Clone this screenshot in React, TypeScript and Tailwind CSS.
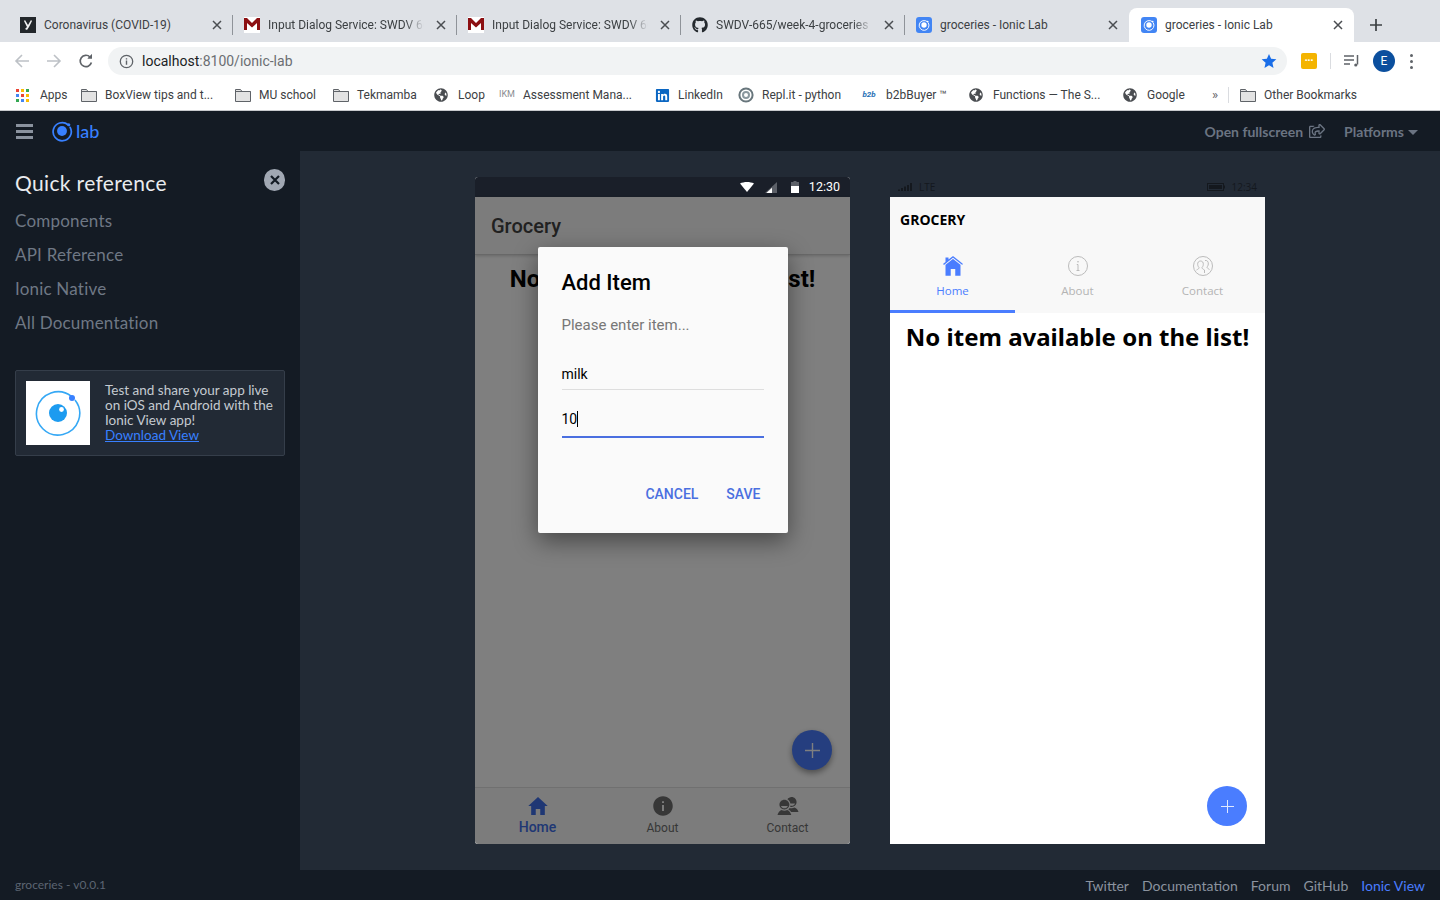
import { FaGithub, FaLinkedin, FaRegShareSquare, FaGlobeAmericas } from 'react-icons/fa'
import { IoMdHome, IoMdInformationCircle, IoMdContacts, IoIosHome } from 'react-icons/io'
import type { ReactNode } from 'react'

function IonicRing({ size, color = '#3880ff' }: { size: number; color?: string }) {
  return (
    <svg width={size} height={size} viewBox="0 0 24 24" fill="none">
      <path d="M18.6 5.2 A9.9 9.9 0 1 0 20.9 8" stroke={color} strokeWidth="1.9" strokeLinecap="round" />
      <circle cx="12" cy="12" r="5.4" fill={color} />
      <circle cx="19.4" cy="5.2" r="1.7" fill={color} />
    </svg>
  )
}

function TabIonic() {
  return (
    <div className="flex h-4 w-4 items-center justify-center rounded-[3px] bg-[#4285f4]">
      <IonicRing size={12} color="#ffffff" />
    </div>
  )
}

function GmailM() {
  return (
    <svg width="16" height="16" viewBox="0 0 16 16">
      <rect width="16" height="16" fill="#fff" />
      <path d="M0 1h3l5 5 5-5h3v12h-3V6L8 10.5 3 6v7H0z" fill="#8c0f12" />
    </svg>
  )
}

function CoronaIcon() {
  return (
    <svg width="16" height="16" viewBox="0 0 16 16">
      <rect width="16" height="16" fill="#23272b" />
      <path d="M5 3l3 5 3-5 1 1-3 6-2 3-2-1 2-2-3-6z" fill="#f1f1f1" />
    </svg>
  )
}

function CloseX({ color = '#4a4d51' }: { color?: string }) {
  return (
    <svg width="10" height="10" viewBox="0 0 10 10">
      <path d="M1 1l8 8M9 1l-8 8" stroke={color} strokeWidth="1.5" />
    </svg>
  )
}

const tabs: { title: string; icon: ReactNode; fade?: boolean; active?: boolean; sep?: boolean }[] = [
  { title: 'Coronavirus (COVID-19)', icon: <CoronaIcon />, sep: true },
  { title: 'Input Dialog Service: SWDV 665', icon: <GmailM />, fade: true, sep: true },
  { title: 'Input Dialog Service: SWDV 665', icon: <GmailM />, fade: true, sep: true },
  { title: 'SWDV-665/week-4-groceries', icon: <FaGithub size={16} color="#24292e" />, fade: true, sep: true },
  { title: 'groceries - Ionic Lab', icon: <TabIonic /> },
  { title: 'groceries - Ionic Lab', icon: <TabIonic />, active: true },
]

function ChromeTab({ title, icon, fade, active, sep }: (typeof tabs)[number]) {
  return (
    <div
      className={
        active
          ? 'relative flex h-[34px] w-[225px] items-center rounded-t-lg bg-white pl-[12px] pr-[11px]'
          : 'relative flex h-[34px] w-[224px] items-center pl-[11px] pr-[11px]'
      }
    >
      <div className="flex w-4 shrink-0 items-center justify-center">{icon}</div>
      <div
        className={
          fade
            ? 'ml-2 flex-1 overflow-hidden whitespace-nowrap text-[12px] text-[#3c4043] [mask-image:linear-gradient(to_right,black_88%,transparent)]'
            : 'ml-2 flex-1 overflow-hidden whitespace-nowrap text-[12px] text-[#3c4043]'
        }
      >
        {title}
      </div>
      <div className="ml-3 flex w-[10px] shrink-0 items-center">
        <CloseX />
      </div>
      {sep && <div className="absolute right-0 top-[7px] h-[20px] w-px bg-[#8f9399]" />}
    </div>
  )
}

function AppsGrid() {
  const colors = ['#ea4335', '#fbbc05', '#34a853', '#4285f4', '#ea4335', '#fbbc05', '#34a853', '#4285f4', '#fbbc05']
  return (
    <div className="grid w-[13px] grid-cols-3 gap-[2px]">
      {colors.map((c, i) => (
        <div key={i} className="h-[3px] w-[3px]" style={{ background: c }} />
      ))}
    </div>
  )
}

function FolderIcon() {
  return (
    <svg width="16" height="14" viewBox="0 0 16 14">
      <path d="M.5 1.5h5l1.5 2h8.5v10H.5z" fill="#e3e3e3" stroke="#5f6368" />
      <path d="M.5 3.5h15" stroke="#5f6368" />
    </svg>
  )
}

function Globe() {
  return <FaGlobeAmericas size={14} color="#4a4d51" />
}

function ReplIcon() {
  return (
    <svg width="16" height="16" viewBox="0 0 16 16" fill="none">
      <circle cx="8" cy="8" r="6.6" stroke="#68767c" strokeWidth="2" />
      <circle cx="8" cy="8" r="3" stroke="#8a989e" strokeWidth="2" />
    </svg>
  )
}

const bookmarks: { label: string; icon: ReactNode; gap: string; width: string }[] = [
  { label: 'Apps', icon: <AppsGrid />, gap: 'ml-[10px]', width: 'w-[67px]' },
  { label: 'BoxView tips and t...', icon: <FolderIcon />, gap: 'ml-[8px]', width: 'w-[154px]' },
  { label: 'MU school', icon: <FolderIcon />, gap: 'ml-[8px]', width: 'w-[98px]' },
  { label: 'Tekmamba', icon: <FolderIcon />, gap: 'ml-[8px]', width: 'w-[100px]' },
  { label: 'Loop', icon: <Globe />, gap: 'ml-[9px]', width: 'w-[66px]' },
  {
    label: 'Assessment Mana...',
    icon: <span className="text-[9px] text-[#8a8d91]">IKM</span>,
    gap: 'ml-[8px]',
    width: 'w-[155px]',
  },
  { label: 'LinkedIn', icon: <FaLinkedin size={15} color="#0a66c2" />, gap: 'ml-[8px]', width: 'w-[84px]' },
  { label: 'Repl.it - python', icon: <ReplIcon />, gap: 'ml-[8px]', width: 'w-[123px]' },
  {
    label: 'b2bBuyer ™',
    icon: <span className="text-[8px] font-bold italic text-[#1f6fb5]">b2b</span>,
    gap: 'ml-[9px]',
    width: 'w-[107px]',
  },
  { label: 'Functions — The S...', icon: <Globe />, gap: 'ml-[9px]', width: 'w-[154px]' },
  { label: 'Google', icon: <Globe />, gap: 'ml-[9px]', width: 'w-[80px]' },
]

function BrowserChrome() {
  return (
    <div className="font-['Roboto',sans-serif]">
      <div className="flex h-[42px] items-end bg-[#dee1e6] pl-[9px]">
        {tabs.map((t, i) => (
          <ChromeTab key={i} {...t} />
        ))}
        <div className="flex h-[34px] w-[44px] items-center justify-center text-[22px] font-normal text-[#3c4043]">
          <svg width="12" height="12" viewBox="0 0 12 12">
            <path d="M6 0v12M0 6h12" stroke="#3c4043" strokeWidth="1.7" />
          </svg>
        </div>
      </div>

      <div className="flex h-[38px] items-center bg-white pl-[14px]">
        <svg width="16" height="16" viewBox="0 0 16 16" fill="none" stroke="#bdc1c6" strokeWidth="1.6">
          <path d="M15 8H2M8 2L2 8l6 6" />
        </svg>
        <svg className="ml-[16px]" width="16" height="16" viewBox="0 0 16 16" fill="none" stroke="#bdc1c6" strokeWidth="1.6">
          <path d="M1 8h13M8 2l6 6-6 6" />
        </svg>
        <svg className="ml-[16px]" width="16" height="16" viewBox="0 0 16 16" fill="none" stroke="#5f6368" strokeWidth="1.7">
          <path d="M13.4 9.5A5.7 5.7 0 1 1 12 4" />
          <path d="M14 1v4.6H9.4" fill="#5f6368" stroke="none" />
          <path d="M14 1.2v4.4H9.6z" fill="#5f6368" stroke="none" />
        </svg>
        <div className="ml-[14px] flex h-[28px] w-[1179px] items-center rounded-full bg-[#f1f3f4] pl-[11px] pr-[10px]">
          <svg width="15" height="15" viewBox="0 0 15 15" fill="none">
            <circle cx="7.5" cy="7.5" r="6.2" stroke="#5f6368" strokeWidth="1.3" />
            <path d="M7.5 6.6v4.2M7.5 4.2v1.4" stroke="#5f6368" strokeWidth="1.4" />
          </svg>
          <div className="ml-[8px] flex-1 text-[14px] text-[#6b6e72]">
            <span className="text-[#202124]">localhost</span>:8100/ionic-lab
          </div>
          <svg width="16" height="16" viewBox="0 0 24 24" fill="#1a6ee8">
            <path d="M12 1.5l3.2 7.2 7.8.8-5.9 5.2 1.7 7.7L12 18.4l-6.8 4 1.7-7.7L1 9.5l7.8-.8z" />
          </svg>
        </div>
        <div className="ml-[14px] flex h-[16px] w-[16px] items-center justify-center rounded-[2px] bg-[#f4b400] text-[8px] font-bold leading-none text-white">
          •••
        </div>
        <div className="ml-[13px] h-[16px] w-px bg-[#dadce0]" />
        <svg className="ml-[13px]" width="16" height="14" viewBox="0 0 16 14" fill="none" stroke="#5f6368" strokeWidth="1.5">
          <path d="M0 2h10M0 6h10M0 10h6M13.5 1v9.5" />
          <circle cx="11.8" cy="11" r="1.6" fill="#5f6368" stroke="none" />
        </svg>
        <div className="ml-[13px] flex h-[22px] w-[22px] items-center justify-center rounded-full bg-[#0b4f9e] text-[12px] text-white">
          E
        </div>
        <div className="ml-[15px] flex flex-col gap-[3px]">
          <div className="h-[3px] w-[3px] rounded-full bg-[#5f6368]" />
          <div className="h-[3px] w-[3px] rounded-full bg-[#5f6368]" />
          <div className="h-[3px] w-[3px] rounded-full bg-[#5f6368]" />
        </div>
      </div>

      <div className="flex h-[31px] items-center border-b border-[#c8cacd] bg-white pl-[14px] text-[12px] text-[#3c4043]">
        {bookmarks.map((b) => (
          <div key={b.label} className={`flex shrink-0 items-center ${b.width}`}>
            <div className="flex w-4 shrink-0 items-center justify-center">{b.icon}</div>
            <span className={`${b.gap} whitespace-nowrap`}>{b.label}</span>
          </div>
        ))}
        <span className="ml-[10px] text-[13px] text-[#5f6368]">»</span>
        <div className="ml-[10px] h-[16px] w-px bg-[#dadce0]" />
        <div className="ml-[11px] flex items-center">
          <FolderIcon />
          <span className="ml-[8px] whitespace-nowrap">Other Bookmarks</span>
        </div>
      </div>
    </div>
  )
}

function LabHeader() {
  return (
    <div className="flex h-[40px] items-center bg-[#141b24] pl-[16px] pr-[22px] font-['Lato',sans-serif]">
      <div className="flex w-[17px] flex-col gap-[3px]">
        <div className="h-[3px] bg-[#8a929e]" />
        <div className="h-[3px] bg-[#8a929e]" />
        <div className="h-[3px] bg-[#8a929e]" />
      </div>
      <div className="ml-[18px]">
        <IonicRing size={22} />
      </div>
      <span className="ml-[3px] text-[18px] font-medium leading-none text-[#3880ff]">lab</span>
      <div className="flex-1" />
      <span className="text-[14px] font-bold text-[#6b7482]">Open fullscreen</span>
      <FaRegShareSquare className="ml-[6px]" size={16} color="#6b7482" />
      <span className="ml-[19px] text-[14px] font-bold text-[#6b7482]">Platforms</span>
      <div className="ml-[4px] mt-[2px] h-0 w-0 border-x-[5px] border-t-[5px] border-x-transparent border-t-[#6b7482]" />
    </div>
  )
}

const quickLinks = ['Components', 'API Reference', 'Ionic Native', 'All Documentation']

function Sidebar() {
  return (
    <aside className="flex w-[300px] shrink-0 flex-col bg-[#141b24] px-[15px] pt-[18px] font-['Lato',sans-serif]">
      <div className="flex h-[28px] items-start justify-between">
        <span className="text-[21px] leading-[28px] tracking-[0.35px] text-[#e9ebee]">Quick reference</span>
        <div className="flex h-[22px] w-[21px] items-center justify-center rounded-full bg-[#a1a8b3]">
          <svg width="10" height="10" viewBox="0 0 10 10">
            <path d="M1 1l8 8M9 1l-8 8" stroke="#141b24" strokeWidth="2.2" />
          </svg>
        </div>
      </div>
      <div className="mt-[7px] flex flex-col">
        {quickLinks.map((l) => (
          <span key={l} className="h-[34px] text-[17px] leading-[34px] tracking-[0.2px] text-[#6f7885]">
            {l}
          </span>
        ))}
      </div>
      <div className="mt-[30px] flex h-[86px] items-center rounded-[2px] border border-[#353e4a] bg-[#222a35] pl-[10px]">
        <div className="flex h-[64px] w-[64px] shrink-0 items-center justify-center bg-white">
          <svg width="46" height="46" viewBox="0 0 46 46" fill="none">
            <path d="M36.5 6.5A21.6 21.6 0 1 0 40 10" stroke="#35a8f5" strokeWidth="1.6" />
            <circle cx="23" cy="23" r="9" fill="#1c9bf0" />
            <circle cx="26.5" cy="19.5" r="2.4" fill="#fff" />
            <circle cx="37" cy="8" r="3" fill="#3880ff" />
          </svg>
        </div>
        <div className="ml-[15px] text-[13.5px] leading-[15px] text-[#c5cad1]">
          <div className="whitespace-nowrap">Test and share your app live</div>
          <div className="whitespace-nowrap">on iOS and Android with the</div>
          <div>Ionic View app!</div>
          <div className="text-[#3880ff] underline">Download View</div>
        </div>
      </div>
    </aside>
  )
}

function AndroidPhone() {
  return (
    <div className="relative flex h-[667px] w-[375px] flex-col overflow-hidden rounded-[3px] bg-white font-['Roboto',sans-serif]">
      <div className="flex h-[20px] shrink-0 items-center justify-end bg-[#1a1f29] pr-[10px] text-[12.5px] text-white">
        <svg width="14" height="10" viewBox="0 0 14 10">
          <path d="M0 1.5C4 -.5 10 -.5 14 1.5L7 10z" fill="#fff" />
        </svg>
        <svg className="ml-[11px]" width="12" height="11" viewBox="0 0 12 11">
          <path d="M12 0v11H0z" fill="#5c6068" />
          <path d="M7 5.8V11H1.4z" fill="#fff" />
        </svg>
        <svg className="ml-[14px]" width="8" height="12" viewBox="0 0 8 12">
          <path d="M2.5 0h3v1H8v11H0V1h2.5z" fill="#5c6068" />
          <path d="M0 5h8v7H0z" fill="#fff" />
        </svg>
        <span className="ml-[10px]">12:30</span>
      </div>

      <div className="flex h-[58px] shrink-0 items-center border-b border-[#d0d0d0] bg-[#f8f8f8] pl-[16px] text-[20px] font-medium text-[#424242] shadow-[0_1px_3px_rgba(0,0,0,0.2)]">
        Grocery
      </div>
      <div className="flex-1 pt-[8px] text-center text-[24px] font-bold leading-[32px] text-black">
        No item available on the list!
      </div>
      <div className="relative flex h-[57px] shrink-0 border-t border-[#e0e0e0] bg-[#f8f8f8]">
        <div className="flex flex-1 flex-col items-center pt-[6px] text-[#3f6fe8]">
          <IoMdHome size={24} />
          <span className="mt-[1px] text-[14px] font-medium leading-[16px]">Home</span>
        </div>
        <div className="flex flex-1 flex-col items-center pt-[6px] text-[#6f6f6f]">
          <IoMdInformationCircle size={24} />
          <span className="mt-[2px] text-[12px] leading-[16px]">About</span>
        </div>
        <div className="flex flex-1 flex-col items-center pt-[6px] text-[#6f6f6f]">
          <IoMdContacts size={24} />
          <span className="mt-[2px] text-[12px] leading-[16px]">Contact</span>
        </div>
      </div>
      <div className="absolute bottom-[74px] right-[18px] flex h-[40px] w-[40px] items-center justify-center rounded-full bg-[#4a7dff] shadow-[0_3px_6px_rgba(0,0,0,0.4)]">
        <svg width="15" height="15" viewBox="0 0 15 15">
          <path d="M7.5 0v15M0 7.5h15" stroke="#fff" strokeWidth="1.4" />
        </svg>
      </div>

      {/* backdrop + alert */}
      <div className="absolute inset-x-0 bottom-0 top-[20px] flex justify-center bg-black/50 pt-[50px]">
        <div className="flex h-[286px] w-[250px] flex-col rounded-[2px] bg-[#fafafa] px-[24px] shadow-[0_8px_24px_rgba(0,0,0,0.45)]">
          <div className="mt-[21px] text-[22px] font-medium leading-[30px] text-black">Add Item</div>
          <div className="mt-[17px] text-[15px] leading-[20px] text-[#777777]">Please enter item...</div>
          <div className="mt-[25px] h-[30px] border-b border-[#dedede] pt-[4px] text-[14px] leading-[20px] text-black">milk</div>
          <div className="mt-[16px] flex h-[32px] items-start border-b-2 border-[#4a6fe0] pt-[3px] text-[14px] leading-[20px] text-black">
            10
            <div className="mt-[2px] h-[16px] w-px bg-black" />
          </div>
          <div className="mt-[46px] flex justify-end pr-[3px] text-[14px] font-medium text-[#4a6fe0]">
            <span>CANCEL</span>
            <span className="ml-[28px]">SAVE</span>
          </div>
        </div>
      </div>
    </div>
  )
}

function WindowsPhone() {
  return (
    <div className="relative flex h-[667px] w-[375px] flex-col overflow-hidden bg-white font-['Open_Sans',sans-serif]">
      <div className="flex h-[20px] shrink-0 items-center bg-[#222a35] pl-[8px] pr-[8px] text-[10px] text-[#14181e]">
        <svg width="15" height="8" viewBox="0 0 15 8" fill="#14181e">
          <path d="M0 6.5h2V8H0zM3 5h2v3H3zM6 3.500h2V8H6zM9 2h2v6H9zM12 0h2v8h-2z" />
        </svg>
        <span className="ml-[6px]">LTE</span>
        <div className="flex-1" />
        <svg width="18" height="8" viewBox="0 0 18 8">
          <rect x=".5" y=".5" width="16" height="7" fill="none" stroke="#14181e" />
          <rect x="2" y="2" width="13" height="4" fill="#14181e" />
          <rect x="17" y="2.500" width="1" height="3" fill="#14181e" />
        </svg>
        <span className="ml-[7px]">12:34</span>
      </div>

      <div className="shrink-0 bg-[#f8f8f8]">
        <div className="flex h-[44px] items-center pl-[10px] text-[14px] font-bold text-black">GROCERY</div>
        <div className="flex h-[72px]">
          <div className="flex flex-1 flex-col items-center border-b-[3px] border-[#4a7dff] pt-[13px] text-[#4a7dff]">
            <IoIosHome size={24} />
            <span className="mt-[5px] text-[11.500px] leading-[16px]">Home</span>
          </div>
          <div className="flex flex-1 flex-col items-center pt-[13px] text-[#b4b4b4]">
            <svg width="24" height="24" viewBox="0 0 24 24" fill="none" stroke="currentColor" strokeWidth="0.9">
              <circle cx="12" cy="12" r="9.5" />
              <path d="M12 10.500v6M10.500 16.500h3M10.800 10.500H12" />
              <circle cx="12" cy="7.800" r=".8" fill="currentColor" stroke="none" />
            </svg>
            <span className="mt-[5px] text-[11.500px] leading-[16px]">About</span>
          </div>
          <div className="flex flex-1 flex-col items-center pt-[13px] text-[#b4b4b4]">
            <svg width="24" height="24" viewBox="0 0 24 24" fill="none" stroke="currentColor" strokeWidth="0.9">
              <circle cx="12" cy="12" r="9.5" />
              <path d="M9.500 7c-2 0-3 1.500-2.800 3.500.1 1.500.8 2.500 1.300 3 .2 1-.8 1.600-2.500 2.500M9.500 7c2 0 3 1.500 2.800 3.500-.1 1.500-.8 2.500-1.300 3-.2 1 1.200 1.700 2.500 2.500v3" />
              <path d="M14 6.500c2-.5 3.500 1 3.300 3.500-.1 1.500-.8 2.500-1.300 3-.2 1 1.200 1.700 2.500 2.500" />
            </svg>
            <span className="mt-[5px] text-[11.500px] leading-[16px]">Contact</span>
          </div>
        </div>
      </div>

      <div className="flex-1 pt-[8px] text-center font-['Noto_Sans',sans-serif] text-[24px] font-bold leading-[32px] text-black">
        No item available on the list!
      </div>
      <div className="absolute bottom-[18px] right-[18px] flex h-[40px] w-[40px] items-center justify-center rounded-full bg-[#4a7dff]">
        <svg width="13" height="13" viewBox="0 0 13 13">
          <path d="M6.500 0v13M0 6.500h13" stroke="#dfe8ff" strokeWidth="1" />
        </svg>
      </div>
    </div>
  )
}

function LabFooter() {
  return (
    <div className="flex h-[30px] items-center bg-[#141b24] pl-[15px] pr-[15px] font-['Lato',sans-serif]">
      <span className="text-[12px] text-[#5c6572]">groceries - v0.0.1</span>
      <div className="flex-1" />
      <div className="flex gap-[13px] text-[14px] text-[#8b939f]">
        <span>Twitter</span>
        <span>Documentation</span>
        <span>Forum</span>
        <span>GitHub</span>
        <span className="text-[#4a7dff]">Ionic View</span>
      </div>
    </div>
  )
}

export default function App() {
  return (
    <div className="flex h-[900px] w-[1440px] flex-col overflow-hidden">
      <BrowserChrome />
      <LabHeader />
      <div className="flex h-[719px]">
        <Sidebar />
        <main className="flex flex-1 justify-center gap-[40px] bg-[#222a35] pt-[26px]">
          <AndroidPhone />
          <WindowsPhone />
        </main>
      </div>
      <LabFooter />
    </div>
  )
}
